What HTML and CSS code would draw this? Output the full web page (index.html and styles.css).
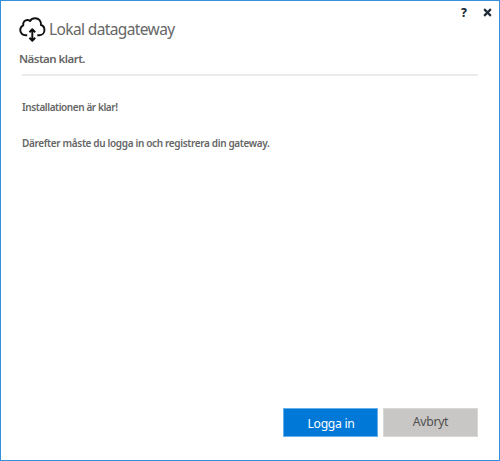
FILE: index.html
```html
<!DOCTYPE html>
<html lang="sv">
<head>
<meta charset="utf-8">
<title>Lokal datagateway</title>
<link rel="stylesheet" href="styles.css">
</head>
<body>
<main class="window">
  <div class="controls"><span class="help">?</span><svg class="close" viewBox="0 0 8 8"><path d="M1 1L7 7M7 1L1 7"/></svg></div>
  <header class="header">
    <svg class="logo" viewBox="0 0 28 26" preserveAspectRatio="none">
      <path d="M8.5 18.2H6.7C3.6 18.2 1.3 15.9 1.3 13.1C1.3 10.5 3 8.9 4.4 8.3C3.9 5.1 6.2 3 8.7 3C9.8 3 10.7 3.3 11.5 4C12.6 2.1 14.6 1.2 16.7 1.2C20.6 1.2 23.2 4.2 22.8 8C25 8.6 26.4 10.5 26.4 12.9C26.4 15.9 24.2 18.2 21.2 18.2H19"/>
      <path d="M13.8 12.5V23M10.8 15.2L13.8 12.2L16.8 15.2M10.8 20.8L13.8 23.8L16.8 20.8"/>
    </svg>
    <h1 class="title">Lokal datagateway</h1>
  </header>
  <h2 class="subtitle"><span>Nästan klart.</span></h2>
  <section class="content">
    <p class="status">Installationen är klar!</p>
    <p class="next">Därefter måste du logga in och registrera din gateway.</p>
  </section>
  <footer class="actions">
    <button class="button primary">Logga in</button>
    <button class="button secondary">Avbryt</button>
  </footer>
</main>
</body>
</html>
```
FILE: styles.css
```css
* { box-sizing: border-box; }
body { margin: 0; font-family: "Noto Sans", sans-serif; }
.window {
  display: flex;
  flex-direction: column;
  width: 500px;
  height: 461px;
  border: 1px solid #3490dc;
  background: #fff;
  color: #666;
}
.controls {
  display: flex;
  justify-content: flex-end;
  align-items: center;
  gap: 16px;
  height: 15px;
  padding: 8px 7px 0 0;
  color: #202c3a;
}
.help { font-size: 12px; line-height: 14px; font-weight: 800; }
.close { width: 9px; height: 9px; fill: none; stroke: #202c3a; stroke-width: 1.9; }
.header { display: flex; height: 28px; padding-left: 18px; }
.logo {
  width: 27px;
  height: 26px;
  margin-top: 1px;
  fill: none;
  stroke: #111;
  stroke-width: 2;
  stroke-linejoin: round;
}
.title { margin: 2px 0 0 3px; font-size: 15.5px; line-height: 22px; font-weight: 400; letter-spacing: -0.62px; white-space: nowrap; }
.subtitle {
  height: 32px;
  margin: 0 21px 0 21px;
  padding-top: 6px;
  border-bottom: 2px solid #ebebeb;
  font-size: 11.5px;
  line-height: 17px;
  font-weight: 600;
  letter-spacing: -0.53px;
}
.subtitle span { margin-left: -3px; }
.content { flex: 1; padding: 23px 0 0 21px; font-size: 10px; line-height: 16px; font-weight: 600; }
.content p { margin: 0 0 20px; letter-spacing: -0.35px; white-space: nowrap; }
.content .status { letter-spacing: -0.42px; }
.actions { display: flex; justify-content: flex-end; gap: 5px; padding: 0 21px 23px 0; }
.button {
  width: 95px;
  height: 29px;
  padding: 0;
  border: 1px solid;
  font-family: inherit;
  font-size: 12.2px;
  line-height: 17px;
  letter-spacing: -0.3px;
}
.primary { padding: 2px 0 0 1px; border-color: #66b0ec; background: #0078d7; color: #fff; }
.secondary { padding: 0 0 2px; border-color: #d8d8d6; background: #c8c7c5; color: #505050; }
```
